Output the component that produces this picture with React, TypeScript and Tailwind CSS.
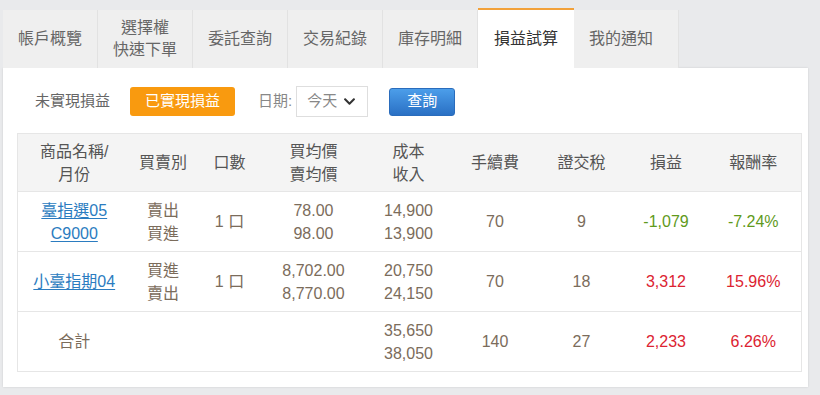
import React from "react";
import { FaChevronDown } from "react-icons/fa";

const FONT = { fontFamily: '"Liberation Sans", "Noto Sans CJK TC", sans-serif' };

const tabs = ["帳戶概覽", "選擇權\n快速下單", "委託查詢", "交易紀錄", "庫存明細", "損益試算", "我的通知"];

function Lines({ a, b }: { a: string; b: string }) {
  return (
    <div className="flex flex-col items-center leading-[23px]">
      <span>{a}</span>
      <span>{b}</span>
    </div>
  );
}

const green = "text-[#5f9a1c]";
const red = "text-[#dc2331]";

const rows = [
  {
    name: ["臺指選05", "C9000"],
    side: ["賣出", "買進"],
    qty: "1 口",
    price: ["78.00", "98.00"],
    cost: ["14,900", "13,900"],
    fee: "70",
    tax: "9",
    pl: "-1,079",
    rate: "-7.24%",
    color: green,
  },
  {
    name: ["小臺指期04"],
    side: ["買進", "賣出"],
    qty: "1 口",
    price: ["8,702.00", "8,770.00"],
    cost: ["20,750", "24,150"],
    fee: "70",
    tax: "18",
    pl: "3,312",
    rate: "15.96%",
    color: red,
  },
];

export default function App() {
  return (
    <div className="w-[820px] h-[395px] bg-[#e9eaec] overflow-hidden" style={FONT}>
      <div className="flex items-end pt-[8px] pl-[3px] h-[68px]">
        {tabs.map((t, i) => {
          const active = i === 5;
          const last = i === tabs.length - 1;
          return (
            <div
              key={t}
              className={
                "flex items-center justify-center text-center whitespace-pre-line text-[16px] leading-[22px] " +
                (active
                  ? "h-[60px] bg-white border-t-2 border-[#f2a13a] text-[#333] w-[96px]"
                  : "h-[58px] bg-[#efefef] text-[#666] border-r border-[#e2e2e2] " +
                    (last ? "w-[105px] pr-[10px]" : "w-[95px]"))
              }
            >
              {t}
            </div>
          );
        })}
      </div>
      <div className="ml-[3px] w-[805px] h-[319px] bg-white pl-[14px] pt-[18px] shadow-[0_0_2px_rgba(0,0,0,0.12)]">
        <div className="flex items-center h-[31px] text-[15px]">
          <span className="ml-[18px] text-[#666]">未實現損益</span>
          <span className="ml-[20px] w-[105px] h-[29px] flex items-center justify-center rounded-[3px] bg-[#f99a0f] text-white">
            已實現損益
          </span>
          <span className="ml-[23px] text-[#888]">日期:</span>
          <span className="ml-[4px] w-[72px] h-[31px] border border-[#dedede] bg-white flex items-center pl-[10px] gap-[6px] text-[#888]">
            今天
            <FaChevronDown className="text-[#333] w-[13px] h-[13px]" />
          </span>
          <span className="ml-[21px] w-[66px] h-[28px] flex items-center justify-center rounded-[3px] bg-gradient-to-b from-[#4c9eea] to-[#2a70c4] border border-[#2a6cbc] text-white">
            查詢
          </span>
        </div>
        <table className="mt-[16px] w-[784px] table-fixed border border-[#e6e6e6] border-collapse text-[16px] text-[#7b6c5b]">
          <colgroup>
            <col className="w-[113px]" />
            <col className="w-[65px]" />
            <col className="w-[68px]" />
            <col className="w-[100px]" />
            <col className="w-[90px]" />
            <col className="w-[83px]" />
            <col className="w-[90px]" />
            <col className="w-[79px]" />
            <col className="w-[96px]" />
          </colgroup>
          <thead>
            <tr className="h-[58px] bg-[#f4f4f4] text-[#555] border-b border-[#e6e6e6]">
              <th className="font-normal p-0">
                <Lines a="商品名稱/" b="月份" />
              </th>
              <th className="font-normal p-0">買賣別</th>
              <th className="font-normal p-0">口數</th>
              <th className="font-normal p-0">
                <Lines a="買均價" b="賣均價" />
              </th>
              <th className="font-normal p-0">
                <Lines a="成本" b="收入" />
              </th>
              <th className="font-normal p-0">手續費</th>
              <th className="font-normal p-0">證交稅</th>
              <th className="font-normal p-0">損益</th>
              <th className="font-normal p-0">報酬率</th>
            </tr>
          </thead>
          <tbody>
            {rows.map((r) => (
              <tr key={r.pl} className="h-[60px] border-b border-[#e6e6e6] text-center">
                <td className="p-0">
                  <div className="flex flex-col items-center leading-[23px] text-[#2b7cc0] underline underline-offset-2">
                    {r.name.map((n) => (
                      <span key={n}>{n}</span>
                    ))}
                  </div>
                </td>
                <td className="p-0">
                  <Lines a={r.side[0]} b={r.side[1]} />
                </td>
                <td className="p-0">{r.qty}</td>
                <td className="p-0">
                  <Lines a={r.price[0]} b={r.price[1]} />
                </td>
                <td className="p-0">
                  <Lines a={r.cost[0]} b={r.cost[1]} />
                </td>
                <td className="p-0">{r.fee}</td>
                <td className="p-0">{r.tax}</td>
                <td className={"p-0 " + r.color}>{r.pl}</td>
                <td className={"p-0 " + r.color}>{r.rate}</td>
              </tr>
            ))}
            <tr className="h-[60px] text-center">
              <td className="p-0">合計</td>
              <td className="p-0"></td>
              <td className="p-0"></td>
              <td className="p-0"></td>
              <td className="p-0">
                <Lines a="35,650" b="38,050" />
              </td>
              <td className="p-0">140</td>
              <td className="p-0">27</td>
              <td className={"p-0 " + red}>2,233</td>
              <td className={"p-0 " + red}>6.26%</td>
            </tr>
          </tbody>
        </table>
      </div>
    </div>
  );
}
